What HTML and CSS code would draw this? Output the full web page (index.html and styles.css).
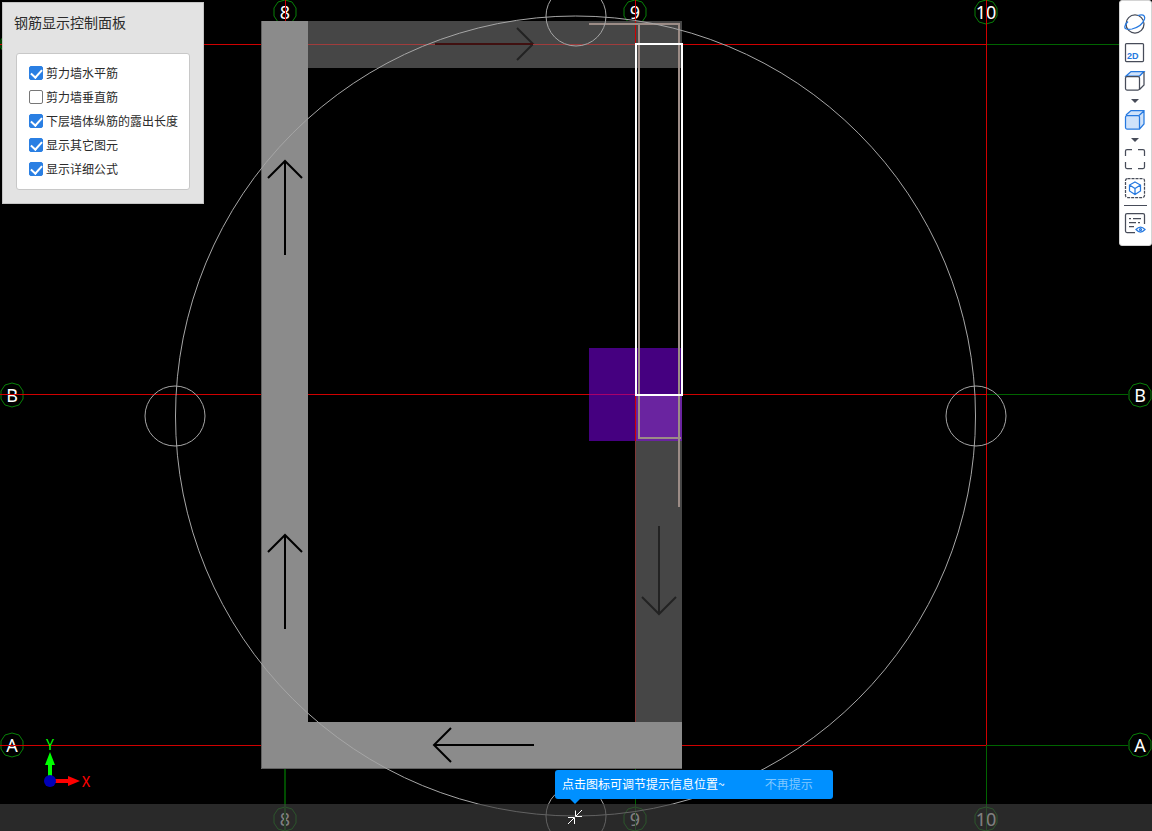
FILE: index.html
```html
<!DOCTYPE html>
<html lang="zh-CN">
<head>
<meta charset="utf-8">
<meta name="viewport" content="width=device-width, initial-scale=1">
<title>钢筋显示控制面板</title>
<link rel="stylesheet" href="styles.css">
</head>
<body>
<main class="stage">
  <svg class="drawing" viewBox="0 0 1152 831" preserveAspectRatio="xMidYMid slice" role="img" aria-label="剪力墙平面图">
    <defs>
      <polygon id="bubble" points="0,-12 7,-10 11,-4 11,4 7,10 0,12 -7,10 -11,4 -11,-4 -7,-10"/>
      <g id="arrow">
        <path d="M0 0V94M-17 17L0 0L17 17"/>
      </g>
    </defs>

    <g class="bubbles">
      <use href="#bubble" x="285" y="12"/><use href="#bubble" x="635" y="12"/><use href="#bubble" x="986" y="12"/>
      <use href="#bubble" x="285" y="819"/><use href="#bubble" x="635" y="819"/><use href="#bubble" x="986" y="819"/>
      <use href="#bubble" x="12" y="44"/><use href="#bubble" x="12" y="395"/><use href="#bubble" x="12" y="745"/>
      <use href="#bubble" x="1140" y="395"/><use href="#bubble" x="1140" y="745"/>
    </g>
    <g class="axis-text">
      <text x="285" y="19">8</text><text x="635" y="19">9</text><text x="986" y="19">10</text>
      <text x="285" y="826">8</text><text x="635" y="826">9</text><text x="986" y="826">10</text>
      <text x="12" y="402">B</text><text x="12" y="752">A</text>
      <text x="1140" y="402">B</text><text x="1140" y="752">A</text>
    </g>
    <g class="grid-green">
      <path d="M986 44.500H1128M986 394.500H1128M986 745.500H1128M635.500 769V831M986.500 745V831"/>
      <path class="thick" d="M285 769V831"/>
    </g>

    <rect class="wall-dark" x="308" y="21" width="374" height="47"/>
    <rect class="wall-dark" x="636" y="441" width="46" height="281"/>
    <rect class="column" x="589" y="348" width="93" height="93"/>
    <rect class="column-overlap" x="636" y="395" width="46" height="46"/>
    <g class="arrows-dim">
      <path d="M435 44H533M517 28L533 44L517 60"/>
      <path d="M659 526V614M642 597L659 614L676 597"/>
    </g>
    <g class="grid-red">
      <path d="M0 44.500H986M0 394.500H986M0 745.500H986M285.500 0V21M635.500 0V44M635.500 395V441M986.500 0V745"/>
      <path class="soft" d="M635.500 441V722"/>
    </g>
    <path class="grid-on-wall" d="M308 44.500H636"/>
    <path class="grid-on-arrow" d="M435 44H533"/>
    <path class="grid-on-column" d="M589 394.500H636"/>

    <path class="wall-fill" d="M261 21H308V722H682V769H261Z"/>
    <path class="wall-edge" d="M261.500 21V768.500H682"/>
    <g class="arrows">
      <use href="#arrow" x="285" y="161"/>
      <use href="#arrow" x="285" y="535"/>
      <path d="M534 745H434M451 728L434 745L451 762"/>
    </g>

    <path class="rebar" d="M589 24H679V507M639 24V438H681"/>
    <rect class="selected" x="636" y="44" width="46" height="351"/>

    <g class="orbit">
      <circle cx="575.500" cy="416" r="400"/>
      <circle cx="576" cy="16" r="30"/><circle cx="175" cy="416" r="30"/>
      <circle cx="976" cy="416" r="30"/><circle cx="576" cy="816" r="30"/>
    </g>

    <g class="ucs">
      <path class="y-axis" d="M48 780V765H45L50 752L55 765H52V780Z"/>
      <path class="x-axis" d="M50 779H68V776L80 781L68 786V783H50Z"/>
      <circle class="origin" cx="50" cy="781" r="6"/>
      <text class="y-name" x="50" y="750">Y</text>
      <text class="x-name" x="86" y="787">X</text>
    </g>
  </svg>

  <section class="panel">
    <h1 class="panel-title">钢筋显示控制面板</h1>
    <div class="options">
      <label class="option"><input type="checkbox" checked>剪力墙水平筋</label>
      <label class="option"><input type="checkbox">剪力墙垂直筋</label>
      <label class="option"><input type="checkbox" checked>下层墙体纵筋的露出长度</label>
      <label class="option"><input type="checkbox" checked>显示其它图元</label>
      <label class="option"><input type="checkbox" checked>显示详细公式</label>
    </div>
  </section>

  <nav class="toolbar" aria-label="视图工具">
    <button class="tool" type="button" aria-label="动态观察">
      <svg viewBox="0 0 22 22"><circle class="ink" cx="11" cy="11" r="9"/><path class="blue" d="M14 2.500C18 1 21.500 2 20.500 6C19 10.500 14 14.500 8 16C3 17 0 16 1 13C1.500 11 2.500 10 4 8.500"/></svg>
    </button>
    <button class="tool" type="button" aria-label="二维视图">
      <svg viewBox="0 0 22 22"><rect class="ink" x="1.500" y="1.500" width="18" height="18" rx="1"/><text class="two-d" x="3" y="17">2D</text></svg>
    </button>
    <button class="tool tool-short" type="button" aria-label="三维视图">
      <svg viewBox="0 0 22 22"><path class="blue pale" d="M2 6L7 1.500H20L15.500 6Z"/><path class="ink" d="M3 6.500H14Q15.500 6.500 15.500 8V18.500Q15.500 20 14 20H3Q1.500 20 1.500 18.500V8Q1.500 6.500 3 6.500ZM20 2V15L15.500 19.500"/></svg>
    </button>
    <button class="caret" type="button" aria-label="三维视图选项"></button>
    <button class="tool tool-short" type="button" aria-label="着色模式">
      <svg viewBox="0 0 22 22"><path class="blue pale" d="M2 6L7 1.500H20V15L15.500 20H3Q1.500 20 1.500 18.500V8Q1.500 6.500 3 6.500H14Q15.500 6.500 15.500 8V20M15 6.500L20 2"/></svg>
    </button>
    <button class="caret" type="button" aria-label="着色模式选项"></button>
    <button class="tool tool-short" type="button" aria-label="全屏">
      <svg viewBox="0 0 22 22"><path class="ink" d="M8 1.500H3Q1.500 1.500 1.500 3V8M14 1.500H19Q20.500 1.500 20.500 3V8M8 20.500H3Q1.500 20.500 1.500 19V14M14 20.500H19Q20.500 20.500 20.500 19V14"/></svg>
    </button>
    <button class="tool" type="button" aria-label="局部三维">
      <svg viewBox="0 0 22 22"><rect class="ink dashed" x="1.500" y="1.500" width="19" height="19" rx="2"/><path class="blue" d="M11 5L16.500 8V14L11 17.500L5.500 14V8ZM5.500 8L11 11.500L16.500 8M11 11.500V17.500"/></svg>
    </button>
    <hr class="divider">
    <button class="tool" type="button" aria-label="显示设置">
      <svg viewBox="0 0 22 22"><path class="ink" d="M11 20.500H3Q1.500 20.500 1.500 19V3Q1.500 1.500 3 1.500H19Q20.500 1.500 20.500 3V12M5 6.500H7M9 6.500H17M5 10.500H12M14 10.500H16M5 14.500H10"/><path class="blue" d="M12 17.500Q16.500 12.500 21 17.500Q16.500 22.500 12 17.500Z"/><circle class="blue" cx="16.500" cy="17.500" r="1"/></svg>
    </button>
  </nav>

  <footer class="statusbar">
    <button class="collapse" type="button" aria-label="调节提示信息位置">
      <svg viewBox="0 0 16 16"><path d="M15 1L9 7M8.500 1.500V7.500H15M1 15L7 9M1 8.500H7.500V15"/></svg>
    </button>
    <div class="tip" role="status">
      <span>点击图标可调节提示信息位置~</span>
      <button class="tip-dismiss" type="button">不再提示</button>
    </div>
  </footer>
</main>
</body>
</html>
```
FILE: styles.css
```css
* { box-sizing: border-box; }

body {
  margin: 0;
  background: #000;
  color: #2b2b2b;
  font: 12px/24px "Noto Sans CJK SC", sans-serif;
}

button {
  padding: 0;
  border: 0;
  background: none;
  font: inherit;
  cursor: pointer;
}

.stage {
  position: relative;
  height: 100vh;
  overflow: hidden;
}

/* Plan drawing */
.drawing { display: block; width: 100%; height: 100%; }
.drawing path, .drawing circle, .drawing rect, .drawing polygon { fill: none; }
.bubbles { stroke: #088008; stroke-width: 1; }
.axis-text {
  fill: #fff;
  font: 18px "Noto Sans", sans-serif;
  text-anchor: middle;
}
.grid-green { stroke: #006400; }
.grid-green .thick { stroke: #004c00; stroke-width: 2; }
.grid-red { stroke: #d00000; }
.grid-red .soft { stroke: #803838; }
.drawing .wall-dark { fill: #464646; }
.drawing .column { fill: #450080; }
.drawing .column-overlap { fill: #6a24a0; }
.grid-on-wall { stroke: #a03c3c; }
.grid-on-arrow { stroke: #401010; stroke-width: 2; }
.grid-on-column { stroke: #a8006c; }
.wall-edge { stroke: #606060; }
.drawing .wall-fill { fill: #8b8b8b; }
.arrows { stroke: #000; stroke-width: 2; }
.arrows-dim { stroke: #222; stroke-width: 2; }
.rebar { stroke: #9c8c86; stroke-width: 2; }
.selected { stroke: #fff; stroke-width: 2; }
.orbit { stroke: #a6a6a6; }
.ucs { font: 15px "Noto Sans CJK SC", sans-serif; text-anchor: middle; }
.drawing .y-axis, .y-name { fill: #0f0; }
.drawing .x-axis, .x-name { fill: #f00; }
.drawing .origin { fill: #0000b8; }

/* Control panel */
.panel {
  position: absolute;
  top: 2px;
  left: 2px;
  padding: 7px 13px 13px;
  border: 1px solid #c4c4c4;
  background: #e3e3e3;
}
.panel-title {
  margin: 0 -2px 19px;
  font-size: 14px;
  font-weight: 400;
  line-height: 24px;
}
.options {
  padding: 7px 11px 8px;
  border: 1px solid #c8c8c8;
  border-radius: 3px;
  background: #fff;
}
.option {
  display: flex;
  align-items: center;
  gap: 2px;
}
.option input {
  appearance: none;
  display: grid;
  place-items: center;
  width: 14px;
  height: 14px;
  margin: 0 1px;
  border: 1px solid #777;
  border-radius: 2px;
  background: #fff;
}
.option input:checked { border-color: #2a7fe3; background: #2a7fe3; }
.option input:checked::before {
  content: "";
  width: 5px;
  height: 9px;
  margin-bottom: 3px;
  border: solid #fff;
  border-width: 0 2px 2px 0;
  transform: rotate(42deg);
}

/* View toolbar */
.toolbar {
  position: absolute;
  top: 0;
  right: 0;
  display: flex;
  flex-direction: column;
  align-items: center;
  width: 33px;
  padding: 8px 1px 8px 0;
  border: 1px solid #d4d4d4;
  border-radius: 3px;
  background: #fff;
}
.tool { display: grid; place-items: center; width: 100%; height: 29px; }
.tool svg { width: 22px; height: 22px; }
.tool-short { height: 28px; }
.ink, .blue { fill: none; stroke: #474c59; stroke-width: 1.25; }
.blue { stroke: #2679e0; }
.drawing .pale, .pale { fill: #cfe2fa; }
.dashed { stroke-dasharray: 3 1; }
.two-d { fill: #2679e0; font: bold 9px "Liberation Sans", sans-serif; }
.caret { display: grid; place-items: center; width: 100%; height: 11px; }
.caret::before {
  content: "";
  border: 4px solid transparent;
  border-top-color: #474c59;
  border-bottom: 0;
}
.divider {
  width: 23px;
  height: 1px;
  margin: 3px 0 2px;
  border: 0;
  background: #474c59;
}

/* Status bar and hint */
.statusbar {
  position: absolute;
  right: 0;
  bottom: 0;
  left: 0;
  display: flex;
  align-items: center;
  justify-content: center;
  height: 27px;
  padding: 0 3px 2px 0;
  background: rgba(62, 62, 62, 0.66);
}
.collapse { display: grid; width: 16px; height: 16px; }
.collapse svg { fill: none; stroke: #fff; stroke-width: 1; }
.tip {
  position: absolute;
  bottom: 32px;
  left: calc(50% - 21px);
  display: flex;
  align-items: center;
  gap: 40px;
  height: 29px;
  padding: 0 20px 1px 7px;
  border-radius: 3px;
  background: #0090ff;
  color: #fff;
  white-space: nowrap;
}
.tip::after {
  content: "";
  position: absolute;
  top: 100%;
  left: 15px;
  border: 5px solid transparent;
  border-top-color: #0090ff;
  border-bottom: 0;
}
.tip-dismiss { color: #80c8ff; }
```
